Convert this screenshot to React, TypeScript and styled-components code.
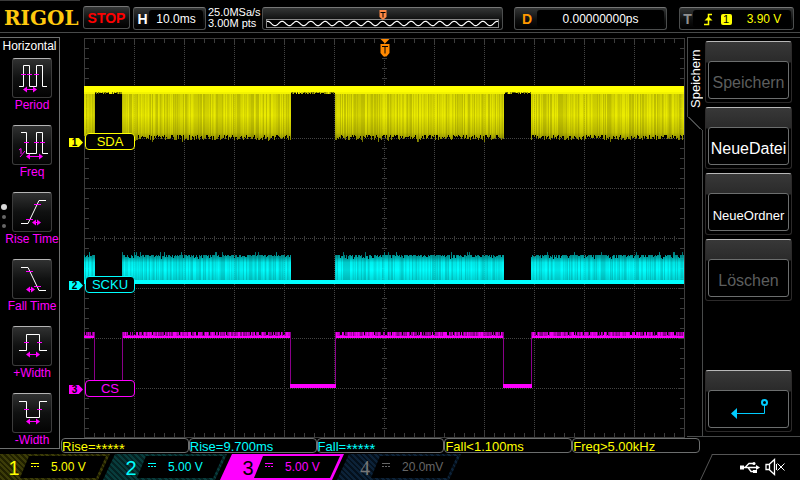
import React from "react";
import styled, { createGlobalStyle } from "styled-components";

const YELLOW = "#ffff00";
const CYAN = "#00ffff";
const MAGENTA = "#ff00ff";
const ORANGE = "#ff8800";
const LINE = "#484a4a";

const GlobalStyle = createGlobalStyle`
  *, *::before, *::after { box-sizing: border-box; }
  body {
    margin: 0;
    background: #000;
    color: #fff;
    font-family: "Liberation Sans", Arial, sans-serif;
    font-size: 13px;
  }
  button { font: inherit; color: inherit; padding: 0; margin: 0; }
  svg { display: block; }
`;

const Page = styled.div`
  display: flex;
  flex-direction: column;
  min-height: 100vh;
  overflow: hidden;
`;

/* ---------- top bar ---------- */

const Header = styled.header`
  display: flex;
  align-items: flex-start;
  height: 33px;
  padding-right: 6px;
  border-bottom: 1px solid ${LINE};
`;

const Logo = styled.div`
  width: 80px;
  height: 32px;
  margin-right: 3px;
  padding-left: 4px;
  border-top: 1px solid #3a3a3a;
  color: #ffc90e;
  font: bold 20px/34px "DejaVu Serif", "Liberation Serif", serif;
`;

const Box = styled.div<{ $w?: number; $gap?: number }>`
  display: flex;
  flex: ${(p) => (p.$w ? `0 0 ${p.$w}px` : "1 1 0")};
  height: 23px;
  margin: 7px 0 0 ${(p) => p.$gap ?? 0}px;
  padding: 2px;
  border: 1px solid #4c4e4e;
  border-top-color: #777;
  border-radius: 3px;
  background: linear-gradient(#343636, #0c0d0d 60%, #000);
`;

const StopButton = styled.button`
  flex: 0 0 47px;
  height: 23px;
  margin-top: 6px;
  border: 1px solid #4c4e4e;
  border-top-color: #777;
  border-radius: 3px;
  background: linear-gradient(#343636, #0c0d0d 60%, #000);
  color: #ff0000;
  font-size: 14px;
  font-weight: bold;
  line-height: 20px;
`;

const BoxLabel = styled.span<{ $color: string; $w: number }>`
  flex: 0 0 ${(p) => p.$w}px;
  color: ${(p) => p.$color};
  font-size: 14px;
  font-weight: bold;
  line-height: 18px;
  text-align: center;
`;

const BoxValue = styled.span<{ $color?: string; $size?: number }>`
  display: flex;
  flex: 1;
  align-items: center;
  justify-content: center;
  border-radius: 3px;
  background: #000;
  color: ${(p) => p.$color ?? "#fff"};
  font-size: ${(p) => p.$size ?? 12}px;
  line-height: 19px;
  padding-top: 2px;
`;

const Rate = styled.div`
  flex: 0 0 56px;
  padding: 7px 0 0 2px;
  font-size: 11px;
  line-height: 11px;
  white-space: nowrap;
`;

const MemoryBox = styled(Box)`
  position: relative;
  align-items: flex-end;
  padding: 2px 3px 1px;
`;

const MemoryStrip = styled.div`
  flex: 1;
  height: 9px;
  border: 1px solid #888;
  background: #000;
`;

const Marker = styled.div<{ $top: number; $color: string }>`
  position: absolute;
  left: 50%;
  top: ${(p) => p.$top}px;
  transform: translateX(-50%);
  color: ${(p) => p.$color};
`;

const SourceBadge = styled.span`
  width: 11px;
  height: 11px;
  margin: 0 15px 0 8px;
  border-radius: 2px;
  background: ${YELLOW};
  color: #000;
  font-size: 11px;
  line-height: 11px;
  text-align: center;
`;

/* ---------- left measurement menu ---------- */

const Body = styled.div`
  display: flex;
  flex: 1 0 auto;
`;

const Sidebar = styled.nav`
  position: relative;
  display: flex;
  flex: 0 0 60px;
  flex-direction: column;
  align-items: stretch;
  align-self: flex-start;
  min-width: 0;
  margin-top: 4px;
  border: 1px solid #6e7070;
  border-left: 0;
`;

const SidebarTitle = styled.h1`
  margin: 0 0 4px;
  font-size: 12px;
  font-weight: normal;
  line-height: 16px;
  text-align: center;
`;

const MeasureButton = styled.button`
  display: flex;
  flex-direction: column;
  align-items: center;
  height: 67px;
  padding-left: 5px;
  border: 0;
  background: none;
  color: ${MAGENTA};
  font-size: 12px;
  line-height: 15px;
  white-space: nowrap;
  &:last-of-type { height: 55px; }
`;

const MeasureTile = styled.span`
  width: 40px;
  height: 40px;
  border: 1px solid #3c3c3c;
  border-top: 1px solid #b4b4b4;
  border-radius: 3px;
  background: linear-gradient(#303131, #101111 50%, #030303);
`;

const ScrollDots = styled.div`
  position: absolute;
  left: 1px;
  top: 166px;
  display: flex;
  flex-direction: column;
  align-items: center;
  gap: 5px;
`;

const Dot = styled.span<{ $active?: boolean }>`
  width: ${(p) => (p.$active ? 6 : 4)}px;
  height: ${(p) => (p.$active ? 6 : 4)}px;
  border-radius: 50%;
  background: ${(p) => (p.$active ? "#d8d8d8" : "#666")};
`;

/* ---------- plot ---------- */

const Main = styled.main`
  display: flex;
  flex: 1;
  flex-direction: column;
  min-width: 0;
`;

const PlotRow = styled.div`
  display: flex;
`;

const Plot = styled.div`
  position: relative;
  flex: 1;
  min-width: 0;
  margin: 5px 2px 0 24px;
  svg.trace { width: 100%; height: 400px; }
`;

const ChannelName = styled.div<{ $top: number; $color: string }>`
  position: absolute;
  left: 1px;
  top: ${(p) => p.$top}px;
  width: 50px;
  height: 17px;
  border: 1px solid ${(p) => p.$color};
  border-radius: 4px;
  background: #000;
  color: ${(p) => p.$color};
  font-size: 13px;
  line-height: 16px;
  text-align: center;
`;

const ChannelTag = styled.div<{ $top: number; $color: string }>`
  position: absolute;
  left: -15px;
  top: ${(p) => p.$top}px;
  width: 14px;
  height: 9px;
  padding-right: 3px;
  background: ${(p) => p.$color};
  clip-path: polygon(0 0, 70% 0, 100% 50%, 70% 100%, 0 100%);
  color: #000;
  font-size: 10px;
  font-weight: bold;
  line-height: 10px;
  text-align: center;
`;

/* ---------- soft key menu ---------- */

const SoftPanel = styled.aside`
  display: flex;
  flex: 0 0 113px;
  margin: 4px 0 1px;
  border: 1px solid ${LINE};
  border-width: 1px 0;
`;

const TabRail = styled.div`
  display: flex;
  flex: 0 0 15px;
  flex-direction: column;
`;

const Tab = styled.div`
  height: 78px;
  padding-bottom: 8px;
  border-left: 1px solid ${LINE};
  font-size: 13px;
  line-height: 15px;
  text-align: left;
  writing-mode: vertical-rl;
`;

const TabText = styled.span`
  display: block;
  height: 70px;
  transform: rotate(180deg);
`;

const TabSlant = styled.div`
  width: 15px;
  height: 14px;
  background: linear-gradient(to top right, transparent 47%, ${LINE} 47%, ${LINE} 53%, transparent 53%);
`;

const TabEdge = styled.div`
  flex: 1;
  border-right: 1px solid ${LINE};
`;

const SoftKeys = styled.div`
  display: flex;
  flex: 1;
  flex-direction: column;
  gap: 4px;
  padding: 3px 8px 4px 2px;
`;

const SoftKey = styled.button<{ $last?: boolean }>`
  display: flex;
  height: 62px;
  margin-top: ${(p) => (p.$last ? "auto" : 0)};
  padding: 19px 2px 3px;
  border: 1px solid #2c2a2a;
  border-top: 1px solid #b8b8b8;
  border-radius: 3px;
  background: linear-gradient(#383838, #2a2a2a 20px, #000 21px);
`;

const SoftFace = styled.span<{ $dim?: boolean; $small?: boolean }>`
  display: flex;
  flex: 1;
  align-items: center;
  justify-content: center;
  height: 38px;
  padding-top: 6px;
  border: 1px solid #6c6e6e;
  border-radius: 3px;
  background: #000;
  color: ${(p) => (p.$dim ? "#5c5e5e" : "#fff")};
  font-size: ${(p) => (p.$small ? 13 : 16)}px;
`;

const BackFace = styled(SoftFace)`
  padding-top: 0;
`;

/* ---------- measurements and channels ---------- */

const Readings = styled.div`
  display: grid;
  grid-template-columns: repeat(5, 1fr);
  margin: 0 100px 0 1px;
`;

const Reading = styled.div<{ $color: string }>`
  height: 15px;
  border: 1px solid #6c6e6e;
  border-radius: 4px;
  color: ${(p) => p.$color};
  font-size: 13px;
  line-height: 15px;
  white-space: nowrap;
`;

const Stars = styled.span`
  font-size: 15px;
  line-height: 1px;
  vertical-align: -3px;
`;

const Footer = styled.footer`
  display: flex;
  height: 26px;
  overflow: hidden;
`;

type Tone = "base" | "selected" | "off";

const Channel = styled.button<{ $back: string; $stripe: string }>`
  display: flex;
  flex: 0 0 124px;
  height: 26px;
  margin-left: -7px;
  padding: 2px 4px 2px 22px;
  border: 0;
  background: repeating-linear-gradient(45deg, ${(p) => p.$back} 0 2px, ${(p) => p.$stripe} 2px 4px);
  clip-path: polygon(12px 0, 100% 0, calc(100% - 12px) 100%, 0 100%);
  &:first-child { margin-left: -14px; }
`;

const ChannelNumber = styled.span<{ $color: string; $serif?: boolean }>`
  flex: 0 0 12px;
  color: ${(p) => p.$color};
  font-family: ${(p) => (p.$serif ? '"Liberation Serif", serif' : "inherit")};
  font-size: 20px;
  line-height: 24px;
`;

const ChannelScale = styled.span<{ $color: string }>`
  display: flex;
  flex: 1;
  gap: 12px;
  height: 22px;
  padding-left: 11px;
  background: #000;
  clip-path: polygon(9px 0, 100% 0, calc(100% - 10px) 100%, 0 100%);
  color: ${(p) => p.$color};
  font-size: 12px;
  line-height: 23px;
  white-space: nowrap;
`;

const Coupling = styled.svg`
  flex: none;
  margin-top: 6px;
`;

const StatusArea = styled.div`
  position: relative;
  display: flex;
  align-items: center;
  gap: 5px;
  margin-left: auto;
  width: 100px;
  padding-left: 40px;
  &::before {
    content: "";
    position: absolute;
    inset: 0 -20px 0 6px;
    border: 1px solid #555;
    border-bottom: 0;
    transform: skewX(-25deg);
  }
`;

/* ---------- trace drawing ---------- */

const BURSTS: [number, number][] = [[0, 11], [38, 207], [251, 420], [447, 600]];
const GAPS: [number, number][] = [[11, 38], [207, 251], [420, 447]];

function makeRandom(seed: number) {
  let s = seed;
  return () => {
    s = (s * 1664525 + 1013904223) % 4294967296;
    return s / 4294967296;
  };
}

const col = (x: number, y: number, h: number) => `M${x} ${y}h1v${h}h-1z`;

function columns(
  seed: number,
  span: (r: () => number) => [number, number],
  ranges: [number, number][] = BURSTS
) {
  const r = makeRandom(seed);
  const groups = ["", "", "", ""];
  ranges.forEach(([a, b]) => {
    for (let x = a; x < b; x++) {
      const [y, h] = span(r);
      groups[Math.floor(r() * 4)] += col(x, y, h);
    }
  });
  return groups;
}

const yellowCols = columns(7, (r) => [56, 41 + Math.floor(r() * 6) + (r() > 0.94 ? 2 : 0)]);
const yellowEdge = columns(19, (r) => [54, r() > 0.5 ? 2 : 1], GAPS);
const cyanCols = columns(31, (r) => {
  const y = r() > 0.94 ? 214 : 217 + Math.floor(r() * r() * 5);
  return [y, 242 - y];
});
const magentaCols = columns(53, (r) => {
  const y = r() > 0.16 ? 294 : 297;
  return [y, 298 - y];
});
const OPACITY = [0.84, 0.9, 0.95, 1];

const range = (n: number) => Array.from({ length: n }, (_, i) => i);

function Graticule() {
  let dots = "";
  let ticks = "";
  range(11).forEach((i) => { dots += `M${(i + 1) * 50 + 0.5} 0V400`; });
  range(7).forEach((i) => { dots += `M0 ${(i + 1) * 50 + 0.5}H600`; });
  range(60).forEach((i) => {
    const x = i * 10 + 0.5;
    const l = i % 5 ? 5 : 7;
    ticks += `M${x} 0v${l}M${x} 400v-${l}M${x} 198v5`;
  });
  range(40).forEach((i) => {
    const y = i * 10 + 0.5;
    const l = i % 5 ? 5 : 7;
    ticks += `M0 ${y}h${l}M601 ${y}h-${l}M298 ${y}h5`;
  });
  return (
    <g fill="none" stroke="#3c3c3c">
      <path d={dots} strokeDasharray="1 1" stroke="#444" />
      <path d={ticks} />
      <path d="M0.5 0.5H600.5V399.5H0.5z" />
    </g>
  );
}

function Traces() {
  return (
    <svg className="trace" viewBox="0 0 601 400" preserveAspectRatio="none" shapeRendering="crispEdges">
      <defs>
        <linearGradient id="yl" gradientUnits="userSpaceOnUse" x1="0" y1="56" x2="0" y2="104">
          <stop offset="0" stopColor="#dcdc00" />
          <stop offset="0.45" stopColor="#ebeb00" />
          <stop offset="0.8" stopColor="#c8c800" />
          <stop offset="1" stopColor="#808000" />
        </linearGradient>
        <linearGradient id="cy" gradientUnits="userSpaceOnUse" x1="0" y1="214" x2="0" y2="242">
          <stop offset="0" stopColor="#007c7c" />
          <stop offset="0.2" stopColor="#00a8a8" />
          <stop offset="0.38" stopColor="#00f0f0" />
          <stop offset="0.65" stopColor="#00ffff" />
          <stop offset="1" stopColor="#00dcdc" />
        </linearGradient>
      </defs>
      <Graticule />
      {OPACITY.map((o, i) => (
        <g key={o} opacity={o}>
          <path d={yellowCols[i]} fill="url(#yl)" />
          <path d={cyanCols[i]} fill="url(#cy)" />
        </g>
      ))}
      {magentaCols.map((d, i) => (
        <path key={i} d={d} fill={MAGENTA} opacity={0.55 + i * 0.13} />
      ))}
      {yellowEdge.map((d, i) => (
        <path key={i} d={d} fill={YELLOW} opacity={0.4 + i * 0.18} />
      ))}
      <path d="M0 48H600V54H0z" fill={YELLOW} />
      {BURSTS.map(([a, b]) => (
        <g key={a}>
          <rect x={a} y="54" width={b - a} height="2" fill="#f4f400" />
          <rect x={a} y="298" width={b - a} height="2" fill={MAGENTA} />
        </g>
      ))}
      <path d="M0 242H600V246H0z" fill={CYAN} />
      {GAPS.map(([a, b]) => (
        <g key={a}>
          <path d={col(a - 1, 294, 54) + col(b, 294, 54)} fill="#8a008a" />
          <rect x={a - 1} y="346" width={b - a + 2} height="4" fill={MAGENTA} />
        </g>
      ))}
    </svg>
  );
}

/* ---------- icons ---------- */

function TriggerFlag({ arrow }: { arrow?: boolean }) {
  return arrow ? (
    <svg width="11" height="20" viewBox="0 0 11 20" role="img" aria-label="Trigger">
      <path d="M1 1h9L5.500 5.500zM1 6h9v9l-3 3.500H4L1 15z" fill="currentColor" />
      <path d="M2.500 8.500h6M5.500 8.500v7" stroke="#000" fill="none" />
    </svg>
  ) : (
    <svg width="9" height="11" viewBox="0 0 9 11" role="img" aria-label="Trigger">
      <path d="M1 1h7v7L5 10.500H4L1 8z" fill="currentColor" />
      <path d="M2 3.500h5M4.500 3.500v5" stroke="#000" fill="none" />
    </svg>
  );
}

function MemoryWave() {
  const d = range(233)
    .map((x) => `${x ? "L" : "M"}${x} ${(3.5 - 2.2 * Math.cos(((x - 116) * 2 * Math.PI) / 14.4)).toFixed(1)}`)
    .join("");
  return (
    <svg width="100%" height="7" viewBox="0 0 232 7" preserveAspectRatio="none">
      <path d={d} fill="none" stroke="#fff" strokeWidth="1.2" />
    </svg>
  );
}

const MEASURES: { label: string; wave: string; marks: string; heads: string }[] = [
  {
    label: "Period",
    wave: "M7 28.500H11.500V7.500H17.500V28.500H24.500V7.500H30.500V28.500H35",
    marks: "M9 16.500h5M15 16.500h5M22 16.500h5M13 31.500h10",
    heads: "M11 31.500l4-3v6zM25 31.500l-4-3v6z",
  },
  {
    label: "Freq",
    wave: "M9 7.500H14.500V28.500H24.500V7.500H30.500V28.500H36",
    marks: "M12 17.500h5M22 17.500h5M28 17.500h5M16 31.500h13M7 25l2-1.500V29M8 32L13 26",
    heads: "M14 31.500l4-3v6zM31 31.500l-4-3v6z",
  },
  {
    label: "Rise Time",
    wave: "M9 31.500H16L27 8.500H34",
    marks: "M22 12.500h7M14 27.500h7M21 30.500h6",
    heads: "M20 30.500l4-3v6zM29 30.500l-4-3v6z",
  },
  {
    label: "Fall Time",
    wave: "M9 8.500H16L27 31.500H34",
    marks: "M14 12.500h7M22 27.500h7M16 30.500h6",
    heads: "M14 30.500l4-3v6zM23 30.500l-4-3v6z",
  },
  {
    label: "+Width",
    wave: "M7 24.500H14.500V8.500H27.500V24.500H35",
    marks: "M12 16.500h5M25 16.500h5M16 28.500h10",
    heads: "M14 28.500l4-3v6zM28 28.500l-4-3v6z",
  },
  {
    label: "-Width",
    wave: "M7 8.500H14.500V24.500H27.500V8.500H35",
    marks: "M12 16.500h5M25 16.500h5M16 28.500h10",
    heads: "M14 28.500l4-3v6zM28 28.500l-4-3v6z",
  },
];

function BackIcon() {
  return (
    <svg width="42" height="24" viewBox="0 0 42 24" role="img" aria-label="Zurück">
      <circle cx="36.500" cy="5.500" r="2.500" fill="none" stroke="#00ccff" strokeWidth="2" />
      <path d="M36.500 8V16.500H8" fill="none" stroke="#00ccff" />
      <path d="M3 16.500l6-5.500v11z" fill="#00ccff" />
    </svg>
  );
}

function UsbIcon() {
  return (
    <svg width="20" height="13" viewBox="0 0 20 13" role="img" aria-label="USB">
      <path d="M2 6.500H17M5 6.500l4-4h4M8 6.500l3 4h3" fill="none" stroke="#fff" strokeWidth="1.300" />
      <path d="M16 4l4 2.500L16 9zM13 9h4v3h-4z" fill="#fff" />
      <path d="M0 4.500h4v4H0z" fill="#fff" />
      <circle cx="14" cy="2.500" r="1.500" fill="#fff" />
    </svg>
  );
}

function MuteIcon() {
  return (
    <svg width="20" height="18" viewBox="0 0 20 18" role="img" aria-label="Ton aus">
      <path d="M1 6.500H4L9.500 1.500V16.500L4 11.500H1zM4.500 6.500v5" fill="none" stroke="#fff" strokeWidth="1.300" />
      <path d="M11.500 6v6M12.500 5.500l7 7M19.500 5.500l-7 7" fill="none" stroke="#fff" />
    </svg>
  );
}

/* ---------- data ---------- */

const TRACES = [
  { id: 1, name: "SDA", color: YELLOW, top: 95 },
  { id: 2, name: "SCKU", color: CYAN, top: 238 },
  { id: 3, name: "CS", color: MAGENTA, top: 342 },
];

const READINGS = [
  { name: "Rise=", value: "*****", color: YELLOW },
  { name: "Rise=", value: "9.700ms", color: CYAN },
  { name: "Fall=", value: "*****", color: CYAN },
  { name: "Fall<", value: "1.100ms", color: YELLOW },
  { name: "Freq>", value: "5.00kHz", color: YELLOW },
];

const CHANNELS: { id: number; scale: string; ink: string; number: string; back: string; stripe: string; tone: Tone }[] = [
  { id: 1, scale: "5.00 V", ink: YELLOW, number: YELLOW, back: "#3c3c08", stripe: "#202000", tone: "base" },
  { id: 2, scale: "5.00 V", ink: CYAN, number: CYAN, back: "#083c3c", stripe: "#042222", tone: "base" },
  { id: 3, scale: "5.00 V", ink: MAGENTA, number: "#000", back: MAGENTA, stripe: MAGENTA, tone: "selected" },
  { id: 4, scale: "20.0mV", ink: "#666", number: "#777", back: "#0c2238", stripe: "#04101c", tone: "off" },
];

export default function App() {
  return (
    <Page>
      <GlobalStyle />
      <Header>
        <Logo>RIGOL</Logo>
        <StopButton>STOP</StopButton>
        <Box $w={73} $gap={3}>
          <BoxLabel $color="#fff" $w={13}>H</BoxLabel>
          <BoxValue>10.0ms</BoxValue>
        </Box>
        <Rate>
          <div>25.0MSa/s</div>
          <div>3.00M pts</div>
        </Rate>
        <MemoryBox>
          <MemoryStrip><MemoryWave /></MemoryStrip>
          <Marker $top={1} $color="#ff8844"><TriggerFlag /></Marker>
        </MemoryBox>
        <Box $w={153} $gap={11}>
          <BoxLabel $color="#ff9900" $w={20}>D</BoxLabel>
          <BoxValue>0.00000000ps</BoxValue>
        </Box>
        <Box $w={115} $gap={12}>
          <BoxLabel $color="#909090" $w={11}>T</BoxLabel>
          <BoxValue $color={YELLOW}>
            <svg width="10" height="13" viewBox="0 0 10 13" role="img" aria-label="Flanke">
              <path d="M1 11.500H5.500V1.500H9" fill="none" stroke={YELLOW} strokeWidth="1.500" />
              <path d="M1.500 7.500L5.500 3.500l4 4z" fill={YELLOW} />
            </svg>
            <SourceBadge>1</SourceBadge>
            3.90 V
          </BoxValue>
        </Box>
      </Header>

      <Body>
        <Sidebar>
          <SidebarTitle>Horizontal</SidebarTitle>
          {MEASURES.map((m) => (
            <MeasureButton key={m.label}>
              <MeasureTile>
                <svg width="38" height="38" viewBox="1 1 38 38">
                  <path d={m.wave} fill="none" stroke="#fff" />
                  <path d={m.marks} fill="none" stroke={MAGENTA} />
                  <path d={m.heads} fill={MAGENTA} />
                </svg>
              </MeasureTile>
              {m.label}
            </MeasureButton>
          ))}
          <ScrollDots>
            <Dot $active />
            <Dot />
            <Dot />
          </ScrollDots>
        </Sidebar>

        <Main>
          <PlotRow>
            <Plot>
              <Traces />
              <Marker $top={0} $color={ORANGE}><TriggerFlag arrow /></Marker>
              {TRACES.map((t) => (
                <React.Fragment key={t.id}>
                  <ChannelTag $top={t.top + 5} $color={t.color}>{t.id}</ChannelTag>
                  <ChannelName $top={t.top} $color={t.color}>{t.name}</ChannelName>
                </React.Fragment>
              ))}
            </Plot>
            <SoftPanel>
              <TabRail>
                <Tab><TabText>Speichern</TabText></Tab>
                <TabSlant />
                <TabEdge />
              </TabRail>
              <SoftKeys>
                <SoftKey disabled><SoftFace $dim>Speichern</SoftFace></SoftKey>
                <SoftKey><SoftFace>NeueDatei</SoftFace></SoftKey>
                <SoftKey><SoftFace $small>NeueOrdner</SoftFace></SoftKey>
                <SoftKey disabled><SoftFace $dim>Löschen</SoftFace></SoftKey>
                <SoftKey $last><BackFace><BackIcon /></BackFace></SoftKey>
              </SoftKeys>
            </SoftPanel>
          </PlotRow>
          <Readings>
            {READINGS.map((r, i) => (
              <Reading key={i} $color={r.color}>
                {r.name}
                {r.value === "*****" ? <Stars>{r.value}</Stars> : r.value}
              </Reading>
            ))}
          </Readings>
        </Main>
      </Body>

      <Footer>
        {CHANNELS.map((c) => (
          <Channel key={c.id} $back={c.back} $stripe={c.stripe}>
            <ChannelNumber $color={c.number} $serif={c.tone === "off"}>{c.id}</ChannelNumber>
            <ChannelScale $color={c.ink}>
              <Coupling width="8" height="6" viewBox="0 0 8 6" aria-label="DC">
                <path d="M0 1.500h8M0 4.500h2M3 4.500h2M6 4.500h2" stroke="currentColor" fill="none" />
              </Coupling>
              {c.scale}
            </ChannelScale>
          </Channel>
        ))}
        <StatusArea>
          <UsbIcon />
          <MuteIcon />
        </StatusArea>
      </Footer>
    </Page>
  );
}
